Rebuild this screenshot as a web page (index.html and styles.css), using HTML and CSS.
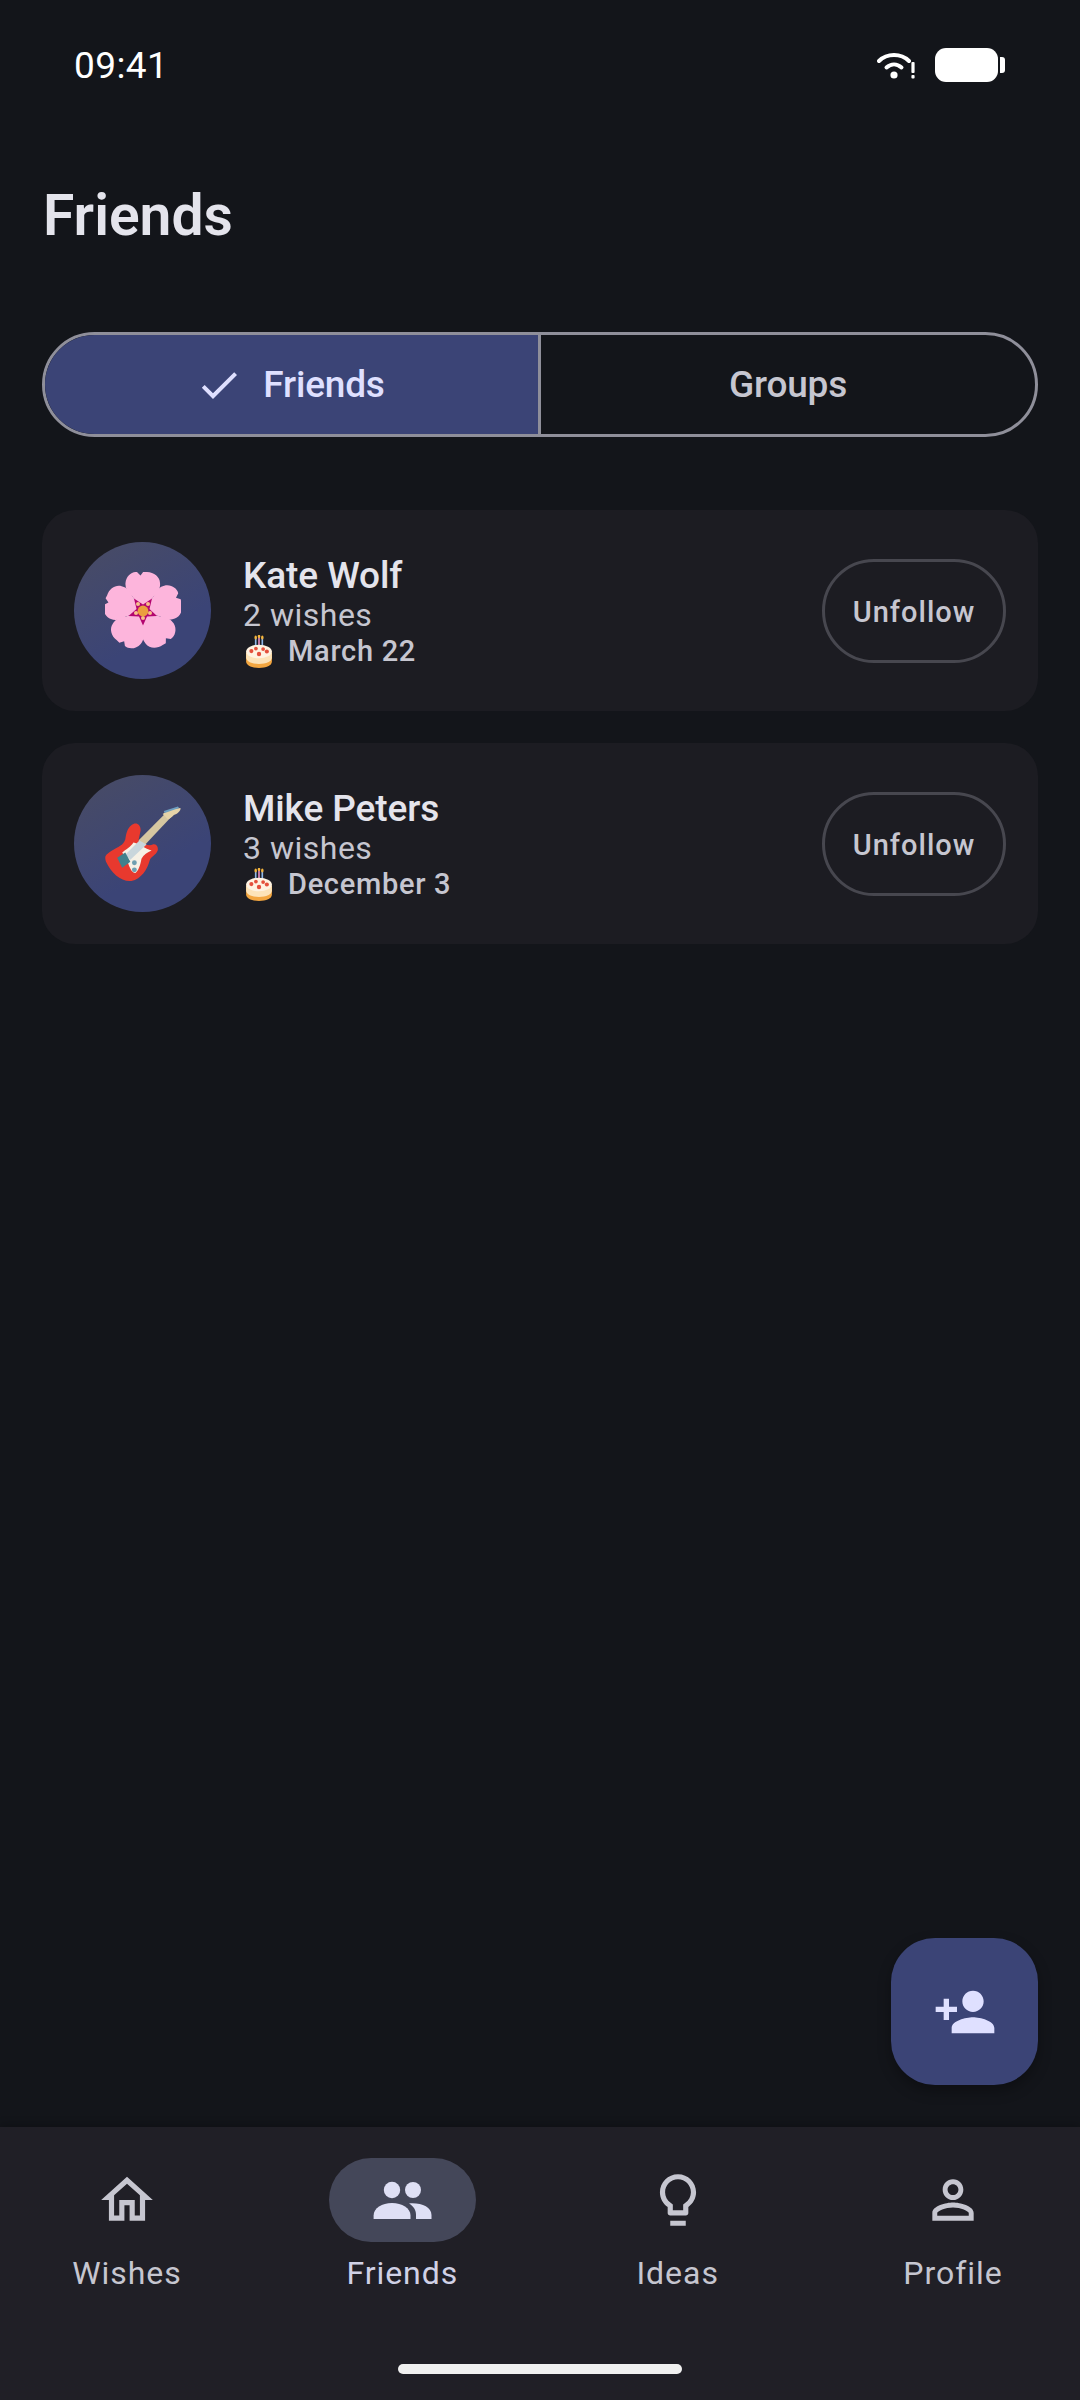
FILE: index.html
```html
<!DOCTYPE html>
<html lang="en">
<head>
    <meta charset="UTF-8">
    <meta name="viewport" content="width=device-width, initial-scale=1.0">
    <title>Friends</title>
    <link rel="stylesheet" href="styles.css">
</head>
<body>
    <!-- Shared cake emoji -->
    <svg class="sprites" aria-hidden="true">
        <symbol id="cake" viewBox="0 0 26 32">
            <rect x="9" y="3" width="1.6" height="10" fill="#8fb8e8"/>
            <rect x="12.2" y="2" width="1.6" height="11" fill="#e58fc0"/>
            <rect x="15.4" y="3" width="1.6" height="10" fill="#8fb8e8"/>
            <ellipse cx="9.8" cy="2.4" rx="1.2" ry="2" fill="#f5b53d"/>
            <ellipse cx="13" cy="1.4" rx="1.2" ry="1.6" fill="#f5b53d"/>
            <ellipse cx="16.2" cy="2.4" rx="1.2" ry="2" fill="#f5b53d"/>
            <path d="M0.5 17v9c0 3.4 5.6 6 12.5 6s12.5-2.6 12.5-6v-9z" fill="#f3a640"/>
            <path d="M0.5 17v5c0 3.4 5.6 6 12.5 6s12.5-2.6 12.5-6v-5z" fill="#fde3b8"/>
            <ellipse cx="13" cy="16" rx="12.5" ry="6.6" fill="#fff3e2"/>
            <circle cx="5.6" cy="15.6" r="2" fill="#e4503c"/>
            <circle cx="10" cy="13.2" r="1.8" fill="#e4503c"/>
            <circle cx="13" cy="18.4" r="2.1" fill="#e4503c"/>
            <circle cx="17" cy="13.6" r="1.8" fill="#e4503c"/>
            <circle cx="20.6" cy="16" r="2" fill="#e4503c"/>
        </symbol>
    </svg>

    <div class="screen">
        <!-- Status bar -->
        <div class="status-bar">
            <span class="status-time">09:41</span>
            <div class="status-icons">
                <svg class="status-wifi" viewBox="0 0 38 27">
                    <path d="M2 9C10 1 24 1 32 9" fill="none" stroke="#fff" stroke-width="4" stroke-linecap="round"/>
                    <path d="M9.5 15.5C14 11.5 20 11.5 24.5 15.5" fill="none" stroke="#fff" stroke-width="4" stroke-linecap="round"/>
                    <circle cx="17" cy="23" r="3.6" fill="#fff"/>
                    <rect x="34.4" y="10" width="3.2" height="11" rx="1" fill="#fff"/>
                    <rect x="34.4" y="23" width="3.2" height="3.4" rx="1" fill="#fff"/>
                </svg>
                <div class="battery"></div>
                <div class="battery-tip"></div>
            </div>
        </div>

        <h1 class="page-title">Friends</h1>

        <!-- Friends / Groups switch -->
        <div class="segments">
            <div class="segment segment-on">
                <svg class="segment-check" viewBox="0 0 24 24"><path d="M9 16.17L4.83 12l-1.42 1.41L9 19 21 7l-1.41-1.41z"/></svg>
                <span>Friends</span>
            </div>
            <div class="segment">
                <span>Groups</span>
            </div>
        </div>

        <!-- Friend list -->
        <div class="friend-list">
            <div class="friend-card">
                <div class="avatar">
                    <svg class="avatar-pic" viewBox="-38 -39 76 78">
                        <g fill="#fdb5dc">
                            <path id="petal" d="M0 0L-11 -15C-16 -19 -18 -24 -17.5 -28C-17 -35 -11 -39.5 -6 -39L-2.5 -35.5L0.5 -39.5L4 -39C11 -39 17 -34 17 -28C17.5 -24 16 -19 11 -15Z"/>
                            <use href="#petal" transform="rotate(72)"/>
                            <use href="#petal" transform="rotate(144)"/>
                            <use href="#petal" transform="rotate(216)"/>
                            <use href="#petal" transform="rotate(288)"/>
                        </g>
                        <polygon points="0,-6.5 9,-12.5 6.5,-2 14,5 4,5.5 0,14.5 -4,5.5 -14.5,5 -6.5,-2 -9,-12.5" fill="#b3056f"/>
                        <g fill="#f7c08a">
                            <circle cx="-5" cy="-7" r="2"/>
                            <circle cx="5" cy="-7" r="2"/>
                            <circle cx="7" cy="2" r="2"/>
                            <circle cx="0" cy="7" r="2"/>
                            <circle cx="-7" cy="2" r="2"/>
                        </g>
                        <circle cx="0" cy="0" r="5.4" fill="#eb9f3e"/>
                    </svg>
                </div>
                <div class="friend-info">
                    <div class="friend-name">Kate Wolf</div>
                    <div class="friend-wishes">2 wishes</div>
                    <div class="friend-birthday">
                        <svg class="cake"><use href="#cake"/></svg>
                        <span>March 22</span>
                    </div>
                </div>
                <button class="unfollow-btn">Unfollow</button>
            </div>

            <div class="friend-card">
                <div class="avatar">
                    <svg class="avatar-pic" viewBox="0 0 75 75">
                        <path d="M31 36L60 7L65 11L37 41Z" fill="#d6c7a1"/>
                        <path d="M57 8C60 5 70 2 74.5 2C75 5 71 8 68 9C66 11 64 13 62 13Z" fill="#e6d3a8"/>
                        <path d="M58 5L72 0.5L73 2L59 7Z" fill="#6f9fc0"/>
                        <path d="M26 19C31 15 36 19 35 25L33 34C38 38 44 40 47 38C50 37 53 40 52 44C50 49 45 50 44 54C42 62 36 72 26 74C16 75 6 66 1 55C-1 49 1 48 7 44C13 40 18 39 20 33C21 27 22 22 26 19Z" fill="#e8392e"/>
                        <path d="M28 36C33 37 40 42 46 44C42 46 38 48 36 52C35 58 33 64 30 66C26 66 24 60 22 54C20 50 18 48 17 46C20 43 26 40 28 36Z" fill="#f6f1e6"/>
                        <path d="M34 34L41 38L25 53L20 48Z" fill="#c9d6dc"/>
                        <path d="M12 51L20 46L25 55L17 61Z" fill="#41808c"/>
                        <circle cx="29" cy="56" r="2.4" fill="#6f9fb0"/>
                        <circle cx="29" cy="63" r="2.4" fill="#6f9fb0"/>
                    </svg>
                </div>
                <div class="friend-info">
                    <div class="friend-name">Mike Peters</div>
                    <div class="friend-wishes">3 wishes</div>
                    <div class="friend-birthday">
                        <svg class="cake"><use href="#cake"/></svg>
                        <span>December 3</span>
                    </div>
                </div>
                <button class="unfollow-btn">Unfollow</button>
            </div>
        </div>

        <!-- Add friend button -->
        <button class="fab">
            <svg class="fab-icon" viewBox="0 0 24 24"><path d="M15 12c2.21 0 4-1.79 4-4s-1.79-4-4-4-4 1.79-4 4 1.79 4 4 4zm-9-2V7H4v3H1v2h3v3h2v-3h3v-2H6zm9 4c-2.67 0-8 1.34-8 4v2h16v-2c0-2.66-5.33-4-8-4z"/></svg>
        </button>

        <!-- Bottom navigation -->
        <nav class="bottom-nav">
            <div class="nav-items">
                <div class="nav-item">
                    <div class="nav-pill">
                        <svg class="nav-icon" viewBox="0 0 24 24"><path d="M12 5.69l5 4.5V18h-2v-6H9v6H7v-7.81l5-4.5M12 3L2 12h3v8h6v-6h2v6h6v-8h3L12 3z"/></svg>
                    </div>
                    <span class="nav-label">Wishes</span>
                </div>
                <div class="nav-item nav-item-on">
                    <div class="nav-pill">
                        <svg class="nav-icon" viewBox="0 0 62 62">
                            <circle cx="21" cy="21" r="8.2"/>
                            <circle cx="42" cy="21" r="8"/>
                            <path d="M2.6 50v-3.5C2.6 39 11 34 21 34s18.5 5 18.5 12.5V50Z"/>
                            <path d="M45 50V45.5C45 41 42.5 37 38 34.5C50 33.5 60.5 38 60.5 46V50Z"/>
                        </svg>
                    </div>
                    <span class="nav-label">Friends</span>
                </div>
                <div class="nav-item">
                    <div class="nav-pill">
                        <svg class="nav-icon" viewBox="0 0 24 24"><path d="M9 20h6v2H9zM12 2C8.1 2 5 5.1 5 9c0 2.4 1.2 4.5 3 5.7V17c0 .5.4 1 1 1h6c.6 0 1-.5 1-1v-2.3c1.8-1.3 3-3.4 3-5.7 0-3.9-3.1-7-7-7zm2.85 11.1l-.85.6V16h-4v-2.3l-.85-.6C7.8 12.16 7 10.63 7 9c0-2.76 2.24-5 5-5s5 2.24 5 5c0 1.63-.8 3.16-2.15 4.1z"/></svg>
                    </div>
                    <span class="nav-label">Ideas</span>
                </div>
                <div class="nav-item">
                    <div class="nav-pill">
                        <svg class="nav-icon" viewBox="0 0 24 24"><path d="M12 5.9c1.16 0 2.1.94 2.1 2.1s-.94 2.1-2.1 2.1S9.9 9.16 9.9 8s.94-2.1 2.1-2.1m0 9c2.97 0 6.1 1.46 6.1 2.1v1.1H5.9V17c0-.64 3.13-2.1 6.1-2.1M12 4C9.79 4 8 5.79 8 8s1.79 4 4 4 4-1.79 4-4-1.79-4-4-4zm0 9c-2.67 0-8 1.34-8 4v3h16v-3c0-2.66-5.33-4-8-4z"/></svg>
                    </div>
                    <span class="nav-label">Profile</span>
                </div>
            </div>
            <div class="home-bar"></div>
        </nav>
    </div>
</body>
</html>
```

FILE: styles.css
```css
/* Basic Styling */
* {
    box-sizing: border-box;
}

body {
    margin: 0;
    background-color: #13151a;
    font-family: Roboto, "Liberation Sans", sans-serif;
    color: #e4e4ec;
}

.sprites {
    display: none;
}

.screen {
    position: relative;
    width: 1080px;
    height: 2400px;
    display: flex;
    flex-direction: column;
    overflow: hidden;
}

/* Status bar */
.status-bar {
    height: 130px;
    padding: 0 75px 0 74px;
    display: flex;
    justify-content: space-between;
    align-items: center;
}

.status-time {
    font-size: 37px;
    letter-spacing: 0.4px;
    color: #fff;
}

.status-icons {
    display: flex;
    align-items: center;
}

.status-wifi {
    width: 38px;
    height: 27px;
    margin-right: 20px;
}

.battery {
    width: 63px;
    height: 34px;
    background-color: #fff;
    border-radius: 11px;
}

.battery-tip {
    width: 5px;
    height: 16px;
    margin-left: 2px;
    background-color: #fff;
    border-radius: 0 3px 3px 0;
}

/* Title */
.page-title {
    margin: 51px 0 0;
    padding-left: 43px;
    height: 70px;
    font-size: 57px;
    line-height: 70px;
    font-weight: 600;
}

/* Segmented switch */
.segments {
    margin: 81px 42px 0;
    height: 105px;
    display: flex;
    border: 3px solid #8f8f9a;
    border-radius: 53px;
    overflow: hidden;
}

.segment {
    flex: 1;
    display: flex;
    justify-content: center;
    align-items: center;
    gap: 20px;
    font-size: 37px;
    font-weight: 500;
    letter-spacing: -0.2px;
    color: #c6c6d0;
}

.segment-on {
    flex: none;
    width: 496px;
    padding-right: 3px;
    background-color: #3b4476;
    border-right: 3px solid #8f8f9a;
    color: #dfe0ff;
}

.segment-check {
    width: 48px;
    height: 48px;
    fill: #dfe0ff;
}

/* Friend cards */
.friend-list {
    margin: 73px 42px 0;
    display: flex;
    flex-direction: column;
    gap: 32px;
}

.friend-card {
    height: 201px;
    padding: 0 32px;
    display: flex;
    align-items: center;
    background-color: #1c1c22;
    border-radius: 33px;
}

.avatar {
    width: 137px;
    height: 137px;
    flex: none;
    display: flex;
    justify-content: center;
    align-items: center;
    border-radius: 50%;
    background: linear-gradient(150deg, #494c64, #3b4476 65%);
}

.avatar-pic {
    width: 76px;
    height: 78px;
}

.friend-info {
    flex: 1;
    margin-left: 32px;
    padding-top: 3px;
}

.friend-name {
    font-size: 37px;
    line-height: 42px;
    font-weight: 500;
    letter-spacing: -0.1px;
    color: #e4e4ec;
}

.friend-wishes {
    font-size: 32px;
    line-height: 37px;
    letter-spacing: 0.5px;
    color: #c6c6d0;
}

.friend-birthday {
    display: flex;
    align-items: center;
    gap: 15px;
    font-size: 29px;
    line-height: 35px;
    font-weight: 500;
    letter-spacing: 0.7px;
    color: #c6c6d0;
}

.cake {
    width: 28px;
    height: 33px;
    margin-left: 2px;
}

.unfollow-btn {
    width: 184px;
    height: 104px;
    flex: none;
    padding: 2px 0 0;
    background: none;
    border: 3px solid #47474f;
    border-radius: 52px;
    font-family: inherit;
    font-size: 29px;
    font-weight: 500;
    line-height: 36px;
    letter-spacing: 1px;
    color: #c6c6d0;
}

/* Floating button */
.fab {
    position: absolute;
    right: 42px;
    bottom: 315px;
    width: 147px;
    height: 147px;
    display: flex;
    justify-content: center;
    align-items: center;
    padding: 0;
    border: none;
    border-radius: 44px;
    background-color: #3b4476;
    box-shadow: 0 6px 14px rgba(0, 0, 0, 0.3);
}

.fab-icon {
    width: 64px;
    height: 64px;
    fill: #dfe0ff;
}

/* Bottom navigation */
.bottom-nav {
    margin-top: auto;
    height: 273px;
    padding-top: 31px;
    background-color: #201f26;
    box-shadow: 0 -3px 8px rgba(0, 0, 0, 0.2);
}

.nav-items {
    padding: 0 27px;
    display: flex;
    justify-content: space-between;
}

.nav-item {
    width: 200px;
    display: flex;
    flex-direction: column;
    align-items: center;
}

.nav-pill {
    width: 147px;
    height: 84px;
    display: flex;
    justify-content: center;
    align-items: center;
    border-radius: 42px;
}

.nav-item-on .nav-pill {
    background-color: #444759;
}

.nav-icon {
    width: 62px;
    height: 62px;
    fill: #c6c6d0;
}

.nav-item-on .nav-icon {
    fill: #dfe0f5;
}

.nav-label {
    margin-top: 11px;
    font-size: 32px;
    line-height: 40px;
    font-weight: 450;
    letter-spacing: 0.95px;
    color: #c6c6d0;
}

.nav-item-on .nav-label {
    color: #d0d1e6;
}

.home-bar {
    width: 284px;
    height: 10px;
    margin: 71px auto 0;
    background-color: #f0f0f0;
    border-radius: 5px;
}
```
